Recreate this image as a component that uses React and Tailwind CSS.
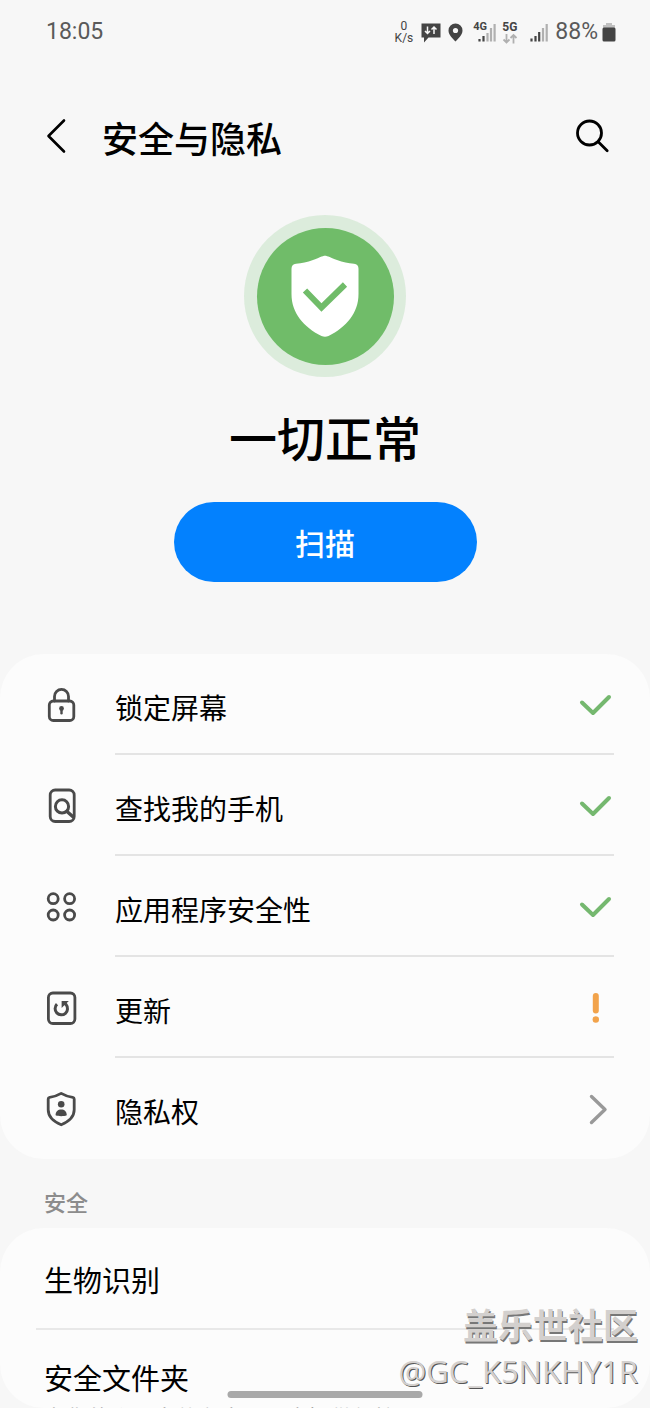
const STATUS_ROWS = [
  { key: "lock",    label: "锁定屏幕",       Icon: LockIcon,    Mark: CheckMark },
  { key: "find",    label: "查找我的手机",   Icon: FindIcon,    Mark: CheckMark },
  { key: "apps",    label: "应用程序安全性", Icon: AppsIcon,    Mark: CheckMark },
  { key: "update",  label: "更新",           Icon: UpdateIcon,  Mark: AlertMark },
  { key: "privacy", label: "隐私权",         Icon: PrivacyIcon, Mark: ArrowMark },
];

const iconProps = {
  viewBox: "0 0 40 40",
  fill: "none",
  stroke: "#4a4a4a",
  strokeWidth: 2.8,
  strokeLinecap: "round",
  strokeLinejoin: "round",
  className: "size-10 shrink-0",
  "aria-hidden": true,
};

function LockIcon() {
  return (
    <svg {...iconProps}>
      <rect x="8.3" y="16" width="24.5" height="19.5" rx="4" />
      <path d="M13.5 16v-4.6a7 7 0 0 1 14 0V16" />
      <circle cx="20.5" cy="23.5" r="2.4" fill="#4a4a4a" stroke="none" />
      <path d="M20.5 24v4.200" strokeWidth="2.4" />
    </svg>
  );
}

function FindIcon() {
  return (
    <svg {...iconProps}>
      <rect x="9.2" y="4" width="24" height="31.5" rx="5" />
      <circle cx="21" cy="20.4" r="6.6" strokeWidth="3" />
      <path d="M26 25.4l6 5.4" strokeWidth="3.4" />
    </svg>
  );
}

function AppsIcon() {
  return (
    <svg {...iconProps}>
      <circle cx="12.2" cy="11.7" r="5" />
      <circle cx="28.6" cy="11.7" r="5" />
      <circle cx="12.2" cy="28" r="5" />
      <circle cx="28.6" cy="28" r="5" />
    </svg>
  );
}

function UpdateIcon() {
  return (
    <svg {...iconProps}>
      <rect x="7.4" y="5" width="26.5" height="30.5" rx="4.5" />
      <path d="M16 16.2a6.2 6.2 0 1 0 9 .4l-1.6-1.8" strokeWidth="3" strokeLinecap="butt" />
      <path d="M20.6 13h7.2l-7.2 7z" fill="#4a4a4a" stroke="none" />
    </svg>
  );
}

function PrivacyIcon() {
  return (
    <svg {...iconProps}>
      <path d="M20.2 4.4c3.8 2.2 8 3.6 11.6 3.9q1.4.2 1.4 1.6V20.8c0 6.3-4.6 11.5-13 15-8.4-3.5-13-8.7-13-15V9.9q0-1.4 1.4-1.6c3.6-.3 7.8-1.7 11.6-3.9z" />
      <circle cx="20.2" cy="15.2" r="3.3" fill="#4a4a4a" stroke="none" />
      <path d="M14.6 26.3c0-3.8 2.4-5.8 5.6-5.8s5.6 2 5.6 5.8c-3 1.2-8.2 1.2-11.2 0z" fill="#4a4a4a" stroke="none" />
    </svg>
  );
}

function CheckMark() {
  return (
    <svg viewBox="0 0 36 36" className="size-9" fill="none" stroke="#75b86f" strokeWidth="4" strokeLinecap="round" strokeLinejoin="round" role="img" aria-label="正常">
      <path d="M4 16.5l11 10.5L31 11" />
    </svg>
  );
}

function AlertMark() {
  return (
    <svg viewBox="0 0 36 36" className="size-9" fill="#f2a34b" role="img" aria-label="注意">
      <rect x="14.8" y="4" width="6" height="20.5" rx="3" />
      <circle cx="17.8" cy="30.5" r="3.2" />
    </svg>
  );
}

function ArrowMark() {
  return (
    <svg viewBox="0 0 36 36" className="size-9" fill="none" stroke="#999999" strokeWidth="3.4" strokeLinecap="round" strokeLinejoin="round" aria-hidden="true">
      <path d="M13.5 6.5L27 19.5L13.5 32.5" />
    </svg>
  );
}

function StatusBar() {
  return (
    <div className="flex h-16 shrink-0 items-center justify-between pr-[34px] pl-[46px] font-['Roboto',sans-serif] text-[23px] leading-7 text-[#5a5a5a]">
      <span>18:05</span>
      <div className="flex items-center">
        <div className="mr-2 text-center text-[12px] leading-3 text-[#444]">
          <div className="h-3">0</div>
          <div className="h-3">K/s</div>
        </div>
        <svg viewBox="0 0 20 21" className="mr-[7px] h-[21px] w-5" aria-hidden="true">
          <path d="M.5 1.5h19v14h-12L3 20.5v-5H.5z" fill="#444" />
          <path d="M6.5 4.500v7M4 9l2.500 2.500L9 9M13 12V5M10.500 7.500L13 5l2.500 2.500" fill="none" stroke="#f7f7f7" strokeWidth="1.5" />
        </svg>
        <svg viewBox="0 0 15 19" className="mr-2.5 h-[19px] w-[15px]" aria-hidden="true">
          <path d="M7.500.5a7 7 0 0 1 7 7c0 4.500-4.500 8.500-7 11-2.500-2.500-7-6.500-7-11a7 7 0 0 1 7-7z" fill="#444" />
          <circle cx="7.5" cy="7.5" r="2.6" fill="#f7f7f7" />
        </svg>
        <div className="relative mr-1.5 h-[22px] w-[23px]">
          <span className="absolute top-0 left-0 text-[11px] leading-3 font-bold text-[#444]">4G</span>
          <svg viewBox="0 0 23 22" className="h-[22px] w-[23px]" aria-hidden="true">
            <path d="M6.500 18v2.500M10.500 15v5.500" stroke="#444" strokeWidth="2.2" />
            <path d="M14.500 12v8.500M18 7v13.500M21.600 3v17.500" stroke="#b0b0b0" strokeWidth="2.2" />
          </svg>
        </div>
        <div className="mr-3">
          <div className="text-[12px] leading-3 font-bold text-[#444]">5G</div>
          <svg viewBox="0 0 16 11" className="h-[11px] w-4" fill="none" stroke="#b0b0b0" strokeWidth="1.8" aria-hidden="true">
            <path d="M4.500 1v8.500M1.500 6.500l3 3 3-3M11.500 10.500V2M8.500 5l3-3 3 3" />
          </svg>
        </div>
        <svg viewBox="0 0 18 20" className="mr-[7px] h-5 w-[18px]" aria-hidden="true">
          <path d="M1.500 16.500v3M5.500 14v5.500M9.200 10v9.500" stroke="#444" strokeWidth="2.2" />
          <path d="M13 6v13.500M16.700 2v17.500" stroke="#b0b0b0" strokeWidth="2.2" />
        </svg>
        <span className="mr-1">88%</span>
        <svg viewBox="0 0 14 20" className="h-5 w-3.5" aria-hidden="true">
          <path d="M4 1h6v2h3v4H1V3h3z" fill="#c0c0c0" />
          <rect x=".5" y="5.5" width="13" height="14" rx="1.5" fill="#444" />
        </svg>
      </div>
    </div>
  );
}

export default function App() {
  return (
    <div className="relative flex h-screen flex-col overflow-hidden bg-[#f7f7f7] font-['Noto_Sans_CJK_SC',sans-serif] text-black">
      <StatusBar />

      <header className="flex h-[143px] shrink-0 items-center px-9">
        <button aria-label="返回" className="mr-[26px]">
          <svg viewBox="0 0 40 40" className="size-10" fill="none" stroke="black" strokeWidth="2.6" strokeLinecap="round" strokeLinejoin="round" aria-hidden="true">
            <path d="M28 4.500L12.500 20L28 35.500" />
          </svg>
        </button>
        <h1 className="flex-1 pt-0.5 text-4xl leading-[52px] font-medium">安全与隐私</h1>
        <button aria-label="搜索">
          <svg viewBox="0 0 44 44" className="size-11" fill="none" stroke="black" strokeWidth="2.8" strokeLinecap="round" aria-hidden="true">
            <circle cx="19.5" cy="19" r="12" />
            <path d="M28.200 27.700l9 9" />
          </svg>
        </button>
      </header>

      <section className="flex shrink-0 flex-col items-center pt-2 pb-[72px]">
        <div className="flex size-[162px] items-center justify-center rounded-full bg-[#dcecdc]">
          <div className="flex size-[137px] items-center justify-center rounded-full bg-[#70bc69]">
            <svg viewBox="0 0 68 82" className="h-[82px] w-[68px]" aria-hidden="true">
              <path d="M34 .8c2.500 0 6 2.200 12 4.200 6 2.200 11 3.200 17 3.800 3 .4 4.500 2 4.500 5V39c0 19-12 33-30 42q-3.500 1.500-7 0C12.500 72 .5 58 .5 39V13.800c0-3 1.500-4.600 4.500-5 6-.6 11-1.600 17-3.800C28 3 31.500.8 34 .8z" fill="white" />
              <path d="M14 35.500L30.500 52.500L54 29.500" fill="none" stroke="#70bc69" strokeWidth="6" />
            </svg>
          </div>
        </div>
        <h2 className="mt-6 text-5xl leading-[70px] font-medium">一切正常</h2>
        <button className="mt-[31px] h-20 w-[303px] rounded-full bg-[#0381fe] text-[30px] leading-10 font-medium text-white">
          扫描
        </button>
      </section>

      <ul className="shrink-0 rounded-[44px] bg-[#fcfcfc] pr-9 pl-[41px]">
        {STATUS_ROWS.map(({ key, label, Icon, Mark }) => (
          <li key={key} className="group">
            <button className="flex w-full items-center gap-[34px] text-left">
              <Icon />
              <span className="flex h-[101px] flex-1 items-center justify-between border-b-2 border-[#e4e4e4] group-last:border-transparent">
                <span className="pt-1.5 text-[28px] leading-10">{label}</span>
                <Mark />
              </span>
            </button>
          </li>
        ))}
      </ul>

      <h3 className="shrink-0 pt-[26px] pb-[11px] pl-11 text-[22px] leading-8 font-medium text-[#8c8c8c]">安全</h3>

      <div className="min-h-0 flex-1 overflow-hidden rounded-[44px] bg-[#fcfcfc] px-9">
        <button className="flex h-[102px] w-full items-center border-b-2 border-[#e8e8e8] px-2 pt-0.5 text-left text-[29px] leading-10">
          生物识别
        </button>
        <button className="block w-full px-2 pt-[26px] text-left">
          <span className="block text-[29px] leading-[42px]">安全文件夹</span>
          <span className="block text-[22px] leading-9 text-[#8c8c8c]">为您的个人文件和应用程序提供保护</span>
        </button>
      </div>

      {/* gesture bar */}
      <div className="absolute bottom-2.5 left-1/2 h-[7px] w-[195px] -translate-x-1/2 rounded-full bg-[#a9a9a9]" />

      {/* community watermark */}
      <div className="absolute right-3 bottom-4 text-right text-[#d3d0ce]">
        <div className="text-[35px] leading-[52px] font-bold [text-shadow:1px_2px_0_#777]">盖乐世社区</div>
        <div className="font-['Open_Sans',sans-serif] text-[31px] leading-[42px] [text-shadow:1px_1px_0_#555]">@GC_K5NKHY1R</div>
      </div>
    </div>
  );
}
